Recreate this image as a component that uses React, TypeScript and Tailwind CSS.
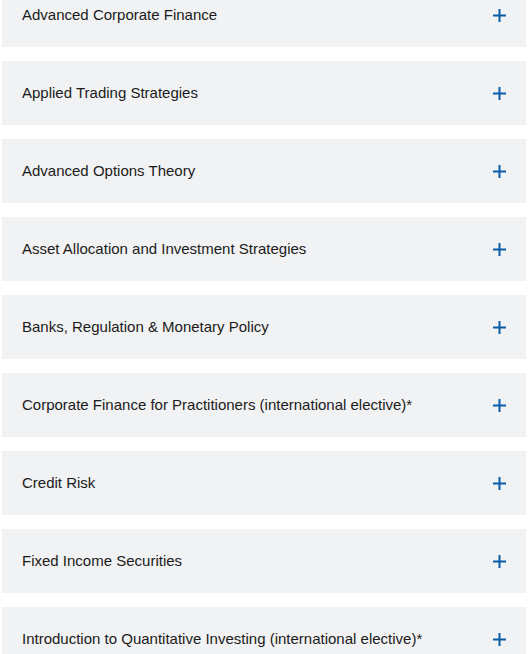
const courses = [
  "Advanced Corporate Finance",
  "Applied Trading Strategies",
  "Advanced Options Theory",
  "Asset Allocation and Investment Strategies",
  "Banks, Regulation & Monetary Policy",
  "Corporate Finance for Practitioners (international elective)*",
  "Credit Risk",
  "Fixed Income Securities",
  "Introduction to Quantitative Investing (international elective)*",
];

const PlusIcon = () => (
  <svg width="13" height="13" viewBox="0 0 13 13" className="shrink-0">
    <rect x="0" y="5.5" width="13" height="2" fill="#0b5ca8" />
    <rect x="5.5" y="0" width="2" height="13" fill="#0b5ca8" />
  </svg>
);

const App = () => {
  return (
    <div className="h-[654px] overflow-hidden bg-white">
      <div
        className="-mt-[17px] flex flex-col gap-[14px] px-[2px]"
        style={{ fontFamily: '"Liberation Sans", Arial, sans-serif' }}
      >
        {courses.map((title) => (
          <button
            key={title}
            className="flex h-16 w-full items-center justify-between bg-[#f1f2f3] pl-5 pr-5 text-left"
          >
            <span className="text-[15px] text-[#1b1b1b]">{title}</span>
            <PlusIcon />
          </button>
        ))}
      </div>
    </div>
  );
};

export default App;
